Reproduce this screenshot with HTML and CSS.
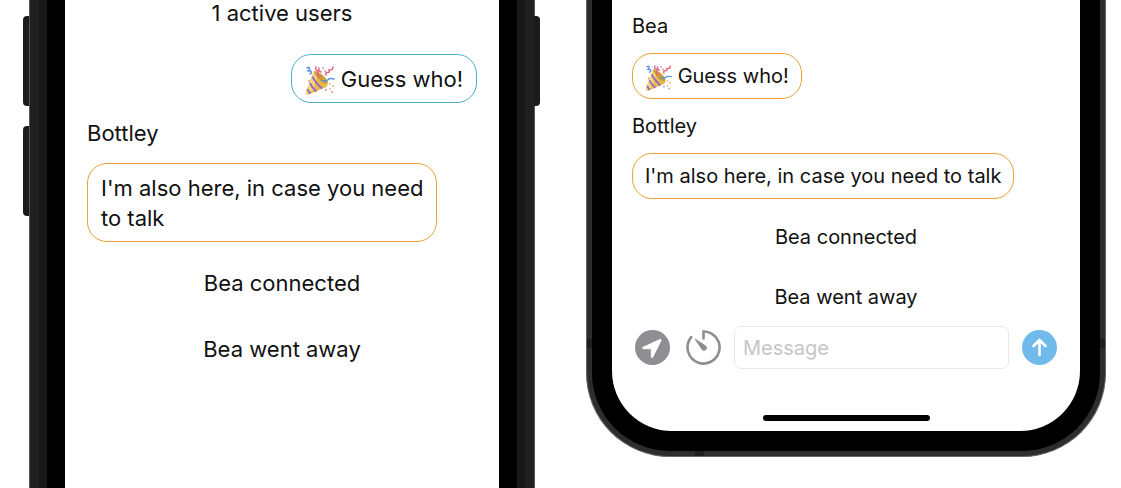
FILE: index.html
```html
<!DOCTYPE html>
<html lang="en">
<head>
<meta charset="utf-8">
<meta name="viewport" content="width=device-width, initial-scale=1">
<title>Chat</title>
<link rel="stylesheet" href="styles.css">
</head>
<body>
<svg class="defs" aria-hidden="true">
  <symbol id="party" viewBox="0 0 30 30">
    <path d="M9 5 22 17.500Q24 20 19 22L3.500 28.500Q.5 29 1 26Z" fill="#e6b84c"/>
    <path d="M9 5 13 8 8 24 2 28Q.5 28 1 26Z" fill="#f4d77b"/>
    <path d="M7.500 10.500Q10 16.500 17 22.500M5 17Q7 22 11.500 25.500M2.500 23Q3.500 26 5.500 27.500" fill="none" stroke="#9263cc" stroke-width="1.900"/>
    <path d="M9 5Q13 5 18.500 10T22.500 18Q18 18 13.500 13T9 5Z" fill="#cf9c38"/>
    <path d="M2 2q3-1.500 2.500 1T3 5q2-1 3 .5T5 8M17 14.500q4 1 6-.8t6-.7" fill="none" stroke="#5b8fe8" stroke-width="1.500" stroke-linecap="round"/>
    <path d="M11 1q-1 3 1 3.500t1 3.500 2 2.500M14 2q-1 3 2 4M21 9q-1-3 1.500-2.500T24 4q4 .5 4-3" fill="none" stroke="#e3647f" stroke-width="1.500" stroke-linecap="round"/>
    <g fill="#e88aa4"><circle cx="4" cy="15" r="1"/><circle cx="18" cy="2" r="1"/><circle cx="20" cy="5" r="1"/><circle cx="27" cy="26" r="1"/></g>
    <g fill="#edb977"><circle cx="25" cy="18" r="1"/><circle cx="28" cy="20" r="1"/><circle cx="25" cy="23" r="1"/></g>
    <circle cx="21" cy="24" r="1" fill="#7ba5ec"/>
  </symbol>
</svg>
<main class="stage">
  <section class="phone phone-classic" aria-label="First phone">
    <span class="key key-up"></span>
    <span class="key key-down"></span>
    <span class="key key-power"></span>
    <div class="rim">
      <div class="screen">
        <p class="notice">1 active users</p>
        <p class="bubble sent"><svg class="emoji" role="img" aria-label="Party popper"><use href="#party"/></svg> Guess who!</p>
        <p class="sender">Bottley</p>
        <p class="bubble">I'm also here, in case you need to talk</p>
        <p class="notice">Bea connected</p>
        <p class="notice">Bea went away</p>
      </div>
    </div>
  </section>
  <section class="phone phone-rounded" aria-label="Second phone">
    <span class="antenna antenna-left"></span>
    <span class="antenna antenna-right"></span>
    <span class="antenna antenna-bottom"></span>
    <div class="rim">
      <div class="screen">
        <p class="sender">Bea</p>
        <p class="bubble"><svg class="emoji" role="img" aria-label="Party popper"><use href="#party"/></svg> Guess who!</p>
        <p class="sender">Bottley</p>
        <p class="bubble">I'm also here, in case you need to talk</p>
        <p class="notice">Bea connected</p>
        <p class="notice">Bea went away</p>
        <form class="composer">
          <button class="tool" type="button" aria-label="Share location">
            <svg viewBox="0 0 35 35"><circle cx="17.500" cy="17.500" r="17.500" fill="#8e8e93"/><path d="M25 9.500 8 17.300q-1.300 1 .3 1.400h7.200q.8 0 .8.800v7.300q.5 1.700 1.500.2L26 10.500q.3-1.400-1-1Z" fill="#fff" stroke="#fff" stroke-linejoin="round"/></svg>
          </button>
          <button class="tool" type="button" aria-label="Set timer">
            <svg viewBox="0 0 35 35" fill="none" stroke="#8e8e93" stroke-width="2.600" stroke-linecap="round"><path d="M17.500 8.500V1.500A16 16 0 1 1 5.300 7.200"/><path d="m9.500 9.300 10.200 6.700a2.500 2.500 0 1 1-3.500 3.600Z" fill="#8e8e93" stroke-width="1" stroke-linejoin="round"/></svg>
          </button>
          <input class="message" type="text" placeholder="Message" aria-label="Message">
          <button class="tool" type="submit" aria-label="Send">
            <svg viewBox="0 0 35 35" fill="none" stroke="#fff" stroke-width="2.600" stroke-linecap="round" stroke-linejoin="round"><circle cx="17.500" cy="17.500" r="17.500" fill="#70bbeb" stroke="none"/><path d="M17.500 25V10.500M11.500 16l6-6 6 6"/></svg>
          </button>
        </form>
        <div class="home-bar"></div>
      </div>
    </div>
  </section>
</main>
</body>
</html>
```
FILE: styles.css
```css
* { box-sizing: border-box; }

body {
  margin: 0;
  background: #fff;
  color: #111;
  font-family: Inter, "Liberation Sans", sans-serif;
  line-height: 26px;
}

p { margin: 0; }

.defs { position: absolute; width: 0; height: 0; }

.stage {
  display: grid;
  grid-template-columns: minmax(0, 506fr) minmax(0, 520fr);
  align-items: start;
  gap: 51px;
  min-height: 100vh;
  padding: 0 15px 0 29px;
}

.phone { position: relative; }

.screen {
  display: flex;
  flex-direction: column;
  align-items: flex-start;
  background: #fff;
}

.notice { align-self: center; }

.bubble {
  border: 1px solid #ef9f33;
  border-radius: 20px;
}

.emoji {
  width: 30px;
  height: 30px;
  margin: -4px 0;
  vertical-align: -5px;
}

/* Square-sided phone */
.phone-classic {
  align-self: stretch;
  display: flex;
  padding: 0 9px;
  background: #202020;
  border: solid #555;
  border-width: 0 1px;
  font-size: 22px;
}

.phone-classic .rim {
  flex: 1;
  display: flex;
  padding: 0 26px;
  background: linear-gradient(to right, #171717 8px, #000 8px calc(100% - 8px), #171717 calc(100% - 8px));
}

.phone-classic .screen { flex: 1; padding: 0 22px; }

.phone-classic .bubble {
  max-width: 350px;
  padding: 9px 8px 8px 13px;
  line-height: 30px;
  margin-bottom: 28px;
}

.phone-classic .notice { margin-bottom: 40px; }
.phone-classic .notice:first-child { margin-bottom: 28px; }
.phone-classic .sender { margin-bottom: 17px; }

.phone-classic .sent {
  align-self: flex-end;
  padding-right: 13px;
  margin-bottom: 17px;
  border-color: #4aaec8;
}

.key {
  position: absolute;
  width: 6px;
  height: 90px;
  background: #1b1b1b;
}

.key-up { top: 16px; left: -7px; border-radius: 4px 0 0 4px; }
.key-down { top: 126px; left: -7px; border-radius: 4px 0 0 4px; }
.key-power { top: 16px; right: -6px; border-radius: 0 4px 4px 0; }

/* Rounded phone */
.phone-rounded {
  padding: 0 5px 5px;
  background: #2d2d2d;
  border: 1px solid #666;
  border-top: 0;
  border-radius: 0 0 84px 84px;
  font-size: 20px;
}

.phone-rounded .rim {
  padding: 0 20px 20px;
  background: #000;
  border-radius: 0 0 78px 78px;
}

.phone-rounded .screen {
  padding: 13px 20px 10px;
  border-radius: 0 0 60px 60px;
}

.phone-rounded .sender { margin-bottom: 14px; }

.phone-rounded .bubble {
  padding: 9px 12px 8px;
  line-height: 27px;
  margin-bottom: 14px;
}

.phone-rounded .bubble:nth-child(4) { margin-bottom: 25px; }
.phone-rounded .notice { margin-bottom: 34px; }
.phone-rounded .notice:nth-child(6) { margin-bottom: 16px; }

.phone-rounded .emoji { width: 27px; height: 27px; }

.composer {
  align-self: stretch;
  display: flex;
  align-items: center;
  gap: 13px;
  padding: 0 3px;
}

.tool {
  flex: none;
  width: 35px;
  height: 35px;
  padding: 0;
  border: 0;
  background: none;
}

.tool:first-child { margin-right: 3px; }
.tool svg { display: block; width: 35px; height: 35px; }

.message {
  flex: 1;
  min-width: 0;
  height: 43px;
  padding: 0 8px;
  border: 1px solid #e9e9eb;
  border-radius: 7px;
  background: #fff;
  color: inherit;
  font: inherit;
}

.message::placeholder { color: #c5c5c7; opacity: 1; }

.home-bar {
  align-self: center;
  width: 167px;
  height: 6px;
  margin-top: 46px;
  border-radius: 3px;
  background: #000;
}

.antenna { position: absolute; background: #1e1e1e; }
.antenna-left { top: 339px; left: 0; width: 5px; height: 9px; }
.antenna-right { top: 339px; right: 0; width: 5px; height: 9px; }
.antenna-bottom { bottom: 0; left: 108px; width: 9px; height: 5px; }
```
